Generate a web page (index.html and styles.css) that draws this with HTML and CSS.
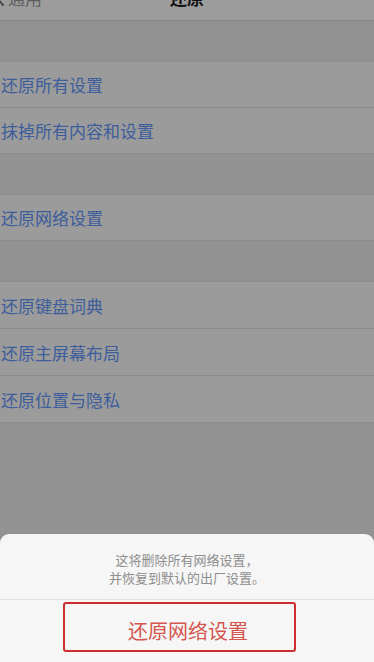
FILE: index.html
```html
<!DOCTYPE html>
<html lang="zh-CN">
<head>
<meta charset="utf-8">
<title>还原</title>
<link rel="stylesheet" href="styles.css">
</head>
<body>
<div class="screen">
  <header class="nav">
    <div class="nav-inner">
      <div class="nav-back">
        <svg class="chev" width="10" height="20" viewBox="0 0 10 20"><path d="M7 3 L1 10 L7 17" fill="none" stroke="#4a4a4a" stroke-width="2" stroke-linecap="round"/></svg>
        <span>通用</span>
      </div>
      <div class="nav-title">还原</div>
      <div></div>
    </div>
  </header>

  <section class="group">
    <div class="row">还原所有设置</div>
    <div class="row">抹掉所有内容和设置</div>
  </section>

  <section class="group">
    <div class="row">还原网络设置</div>
  </section>

  <section class="group group-tall">
    <div class="row">还原键盘词典</div>
    <div class="row">还原主屏幕布局</div>
    <div class="row">还原位置与隐私</div>
  </section>

  <div class="sheet">
    <p class="sheet-msg">这将删除所有网络设置，<br>并恢复到默认的出厂设置。</p>
    <div class="sheet-action">
      <span class="sheet-btn">还原网络设置</span>
      <div class="mark"></div>
    </div>
  </div>
</div>
</body>
</html>
```

FILE: styles.css
```css
html, body {
  margin: 0;
  padding: 0;
}
body {
  background: #929292;
  font-family: "Noto Sans CJK SC", "Noto Sans", sans-serif;
}
.screen {
  width: 374px;
  height: 662px;
  display: flex;
  flex-direction: column;
  overflow: hidden;
  background: #929292;
}
.nav {
  height: 20px;
  flex: none;
  overflow: hidden;
  background: #9c9c9c;
  border-bottom: 1px solid #878787;
}
.nav-inner {
  margin-top: -12px;
  display: grid;
  grid-template-columns: 1fr auto 1fr;
  align-items: center;
  height: 20px;
}
.nav-back {
  display: flex;
  align-items: center;
  gap: 2px;
  margin-left: -4px;
  color: #5e5e5e;
  font-size: 17px;
  line-height: 20px;
}
.chev {
  display: block;
}
.nav-title {
  font-size: 17px;
  line-height: 20px;
  font-weight: 700;
  color: #111;
}
.group {
  flex: none;
  margin-top: 40px;
  background: #9b9b9b;
  border-top: 1px solid #8c8c8c;
  border-bottom: 1px solid #8c8c8c;
}
.row {
  height: 45px;
  display: flex;
  align-items: center;
  padding-left: 1px;
  font-size: 17px;
  color: #3d5d9b;
}
.group-tall .row {
  height: 46px;
}
.row + .row {
  border-top: 1px solid #8c8c8c;
}
.sheet {
  margin-top: auto;
  flex: none;
  height: 128px;
  background: #f6f6f6;
  border-radius: 9px 9px 0 0;
  display: flex;
  flex-direction: column;
}
.sheet-msg {
  margin: 0;
  height: 66px;
  box-sizing: border-box;
  padding-top: 17px;
  text-align: center;
  font-size: 13px;
  line-height: 18px;
  color: #8e8e8e;
  border-bottom: 1px solid #e2e2e2;
}
.sheet-action {
  position: relative;
  flex: 1;
  display: flex;
  align-items: center;
  justify-content: center;
  padding-bottom: 2px;
}
.sheet-btn {
  font-size: 20px;
  color: #d4564e;
  padding-left: 2px;
}
.mark {
  position: absolute;
  left: 63px;
  top: 2px;
  width: 233px;
  height: 50px;
  box-sizing: border-box;
  border: 2px solid #cf2d2d;
  border-radius: 3px;
}
```
